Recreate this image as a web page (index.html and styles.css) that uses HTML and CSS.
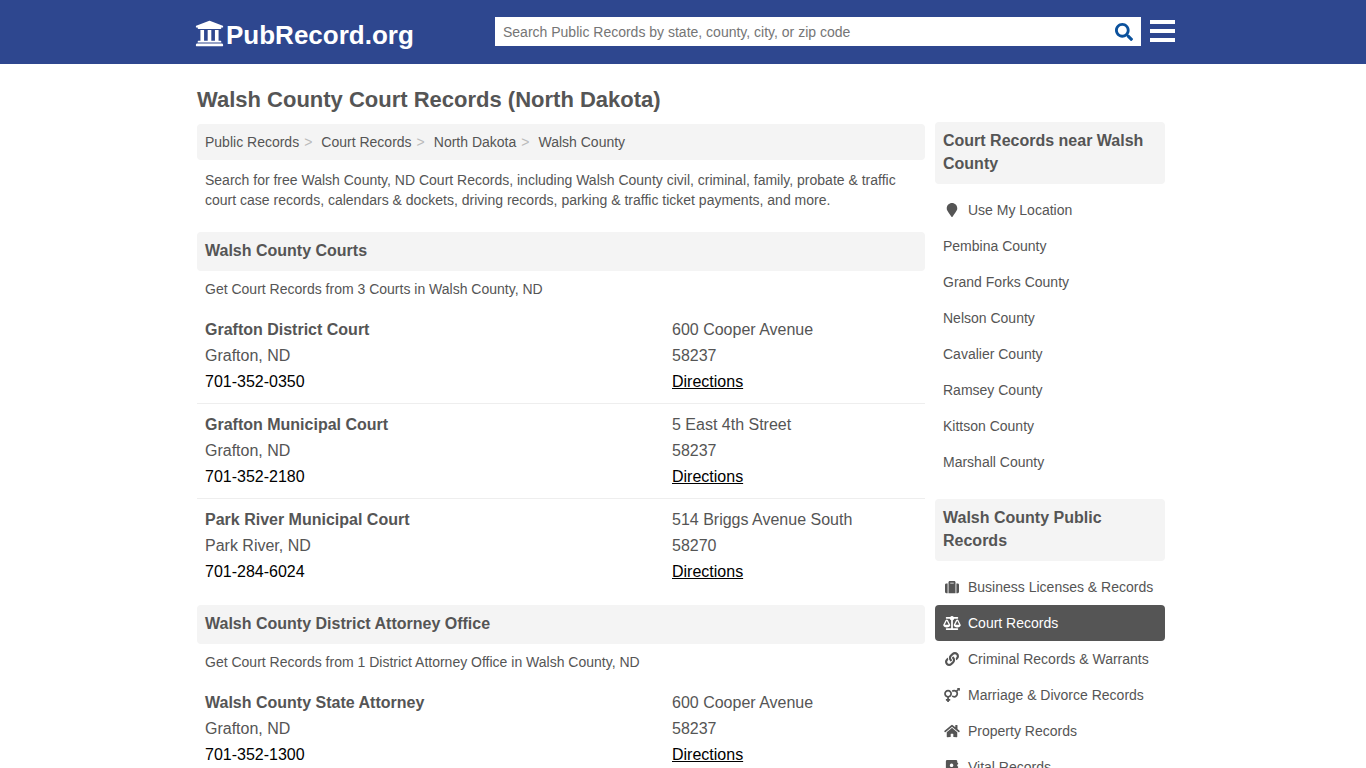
FILE: index.html
```html
<!DOCTYPE html>
<html lang="en">
<head>
<meta charset="utf-8">
<meta name="viewport" content="width=device-width, initial-scale=1">
<title>Walsh County Court Records (North Dakota)</title>
<link rel="stylesheet" href="styles.css">
</head>
<body>

<header class="header">
  <div class="container header-row">
    <a class="logo" href="#">
      <svg viewBox="0 0 512 512" aria-hidden="true"><path d="M496 128v16a8 8 0 0 1-8 8h-24v12c0 6.627-5.373 12-12 12H60c-6.627 0-12-5.373-12-12v-12H24a8 8 0 0 1-8-8v-16a8 8 0 0 1 4.941-7.392l232-88a7.996 7.996 0 0 1 6.118 0l232 88A8 8 0 0 1 496 128zm-24 304H40c-13.255 0-24 10.745-24 24v16a8 8 0 0 0 8 8h464a8 8 0 0 0 8-8v-16c0-13.255-10.745-24-24-24zM96 192v192H60c-6.627 0-12 5.373-12 12v20h416v-20c0-6.627-5.373-12-12-12h-36V192h-64v192h-64V192h-64v192h-64V192H96z"/></svg>
      <span>PubRecord.org</span>
    </a>
    <form class="search" onsubmit="return false">
      <input type="text" aria-label="Search Public Records" placeholder="Search Public Records by state, county, city, or zip code">
      <button type="submit" aria-label="Search">
        <svg viewBox="0 0 512 512"><path d="M505 442.7L405.3 343c-4.5-4.5-10.6-7-17-7H372c27.6-35.3 44-79.7 44-128C416 93.1 322.9 0 208 0S0 93.1 0 208s93.1 208 208 208c48.3 0 92.7-16.4 128-44v16.3c0 6.4 2.5 12.5 7 17l99.7 99.7c9.4 9.4 24.6 9.4 33.9 0l28.3-28.3c9.4-9.4 9.4-24.6.1-34zM208 336c-70.7 0-128-57.2-128-128 0-70.7 57.2-128 128-128 70.7 0 128 57.2 128 128 0 70.7-57.2 128-128 128z"/></svg>
      </button>
    </form>
    <button class="menu" type="button" aria-label="Menu">
      <svg viewBox="0 0 25 22"><path d="M0 0h25v4H0zM0 9h25v4H0zM0 18h25v4H0z"/></svg>
    </button>
  </div>
</header>

<div class="container page">
  <h1>Walsh County Court Records (North Dakota)</h1>

  <div class="columns">
    <main class="content">
      <nav class="breadcrumb" aria-label="Breadcrumb">
        <a href="#">Public Records</a>
        <a href="#">Court Records</a>
        <a href="#">North Dakota</a>
        <a href="#">Walsh County</a>
      </nav>
      <p>Search for free Walsh County, ND Court Records, including Walsh County civil, criminal, family, probate &amp; traffic court case records, calendars &amp; dockets, driving records, parking &amp; traffic ticket payments, and more.</p>

      <section>
        <h2>Walsh County Courts</h2>
        <p>Get Court Records from 3 Courts in Walsh County, ND</p>
        <div class="office">
          <div>
            <a class="name" href="#">Grafton District Court</a>
            <span>Grafton, ND</span>
            <a class="phone" href="tel:701-352-0350">701-352-0350</a>
          </div>
          <div>
            <span>600 Cooper Avenue</span>
            <span>58237</span>
            <a class="directions" href="#">Directions</a>
          </div>
        </div>
        <div class="office">
          <div>
            <a class="name" href="#">Grafton Municipal Court</a>
            <span>Grafton, ND</span>
            <a class="phone" href="tel:701-352-2180">701-352-2180</a>
          </div>
          <div>
            <span>5 East 4th Street</span>
            <span>58237</span>
            <a class="directions" href="#">Directions</a>
          </div>
        </div>
        <div class="office">
          <div>
            <a class="name" href="#">Park River Municipal Court</a>
            <span>Park River, ND</span>
            <a class="phone" href="tel:701-284-6024">701-284-6024</a>
          </div>
          <div>
            <span>514 Briggs Avenue South</span>
            <span>58270</span>
            <a class="directions" href="#">Directions</a>
          </div>
        </div>
      </section>

      <section>
        <h2>Walsh County District Attorney Office</h2>
        <p>Get Court Records from 1 District Attorney Office in Walsh County, ND</p>
        <div class="office">
          <div>
            <a class="name" href="#">Walsh County State Attorney</a>
            <span>Grafton, ND</span>
            <a class="phone" href="tel:701-352-1300">701-352-1300</a>
          </div>
          <div>
            <span>600 Cooper Avenue</span>
            <span>58237</span>
            <a class="directions" href="#">Directions</a>
          </div>
        </div>
      </section>
    </main>

    <aside class="sidebar">
      <section>
        <h2>Court Records near Walsh County</h2>
        <ul>
          <li><a href="#"><svg viewBox="0 0 384 512"><path d="M172.268 501.67C26.97 291.031 0 269.413 0 192 0 85.961 85.961 0 192 0s192 85.961 192 192c0 77.413-26.97 99.031-172.268 309.67-9.535 13.774-29.93 13.773-39.464 0z"/></svg>Use My Location</a></li>
          <li><a href="#">Pembina County</a></li>
          <li><a href="#">Grand Forks County</a></li>
          <li><a href="#">Nelson County</a></li>
          <li><a href="#">Cavalier County</a></li>
          <li><a href="#">Ramsey County</a></li>
          <li><a href="#">Kittson County</a></li>
          <li><a href="#">Marshall County</a></li>
        </ul>
      </section>

      <section>
        <h2>Walsh County Public Records</h2>
        <ul>
          <li><a href="#"><svg viewBox="0 0 512 512"><path d="M128 480h256V80c0-26.5-21.5-48-48-48H176c-26.5 0-48 21.5-48 48v400zm64-384h128v32H192V96zm320 80v256c0 26.5-21.5 48-48 48h-48V128h48c26.5 0 48 21.5 48 48zM96 480H48c-26.5 0-48-21.5-48-48V176c0-26.5 21.5-48 48-48h48v352z"/></svg>Business Licenses &amp; Records</a></li>
          <li><a class="active" href="#"><svg viewBox="0 0 640 512"><path d="M256 336h-.02c0-16.18 1.34-8.73-85.05-181.51-17.65-35.29-68.19-35.36-85.87 0C-2.06 328.75.02 320.33.02 336H0c0 44.18 57.31 80 128 80s128-35.82 128-80zM128 176l72 144H56l72-144zm511.98 160c0-16.18 1.34-8.73-85.05-181.51-17.65-35.29-68.19-35.36-85.87 0-87.12 174.26-85.04 165.84-85.04 181.51H384c0 44.18 57.31 80 128 80s128-35.82 128-80h-.02zM440 320l72-144 72 144H440zm88 128H352V153.25c23.51-10.29 41.16-31.48 46.39-57.25H528c8.84 0 16-7.16 16-16V48c0-8.84-7.16-16-16-16H383.64C369.04 12.68 346.09 0 320 0s-49.04 12.68-63.64 32H112c-8.84 0-16 7.16-16 16v32c0 8.84 7.16 16 16 16h129.61c5.23 25.76 22.87 46.96 46.39 57.25V448H112c-8.84 0-16 7.16-16 16v32c0 8.84 7.16 16 16 16h416c8.84 0 16-7.16 16-16v-32c0-8.84-7.16-16-16-16z"/></svg>Court Records</a></li>
          <li><a href="#"><svg viewBox="0 0 512 512"><path d="M326.612 185.391c59.747 59.809 58.927 155.698.36 214.59-.11.12-.24.25-.36.37l-67.2 67.2c-59.27 59.27-155.699 59.262-214.96 0-59.27-59.26-59.27-155.7 0-214.96l37.106-37.106c9.84-9.84 26.786-3.3 27.294 10.606.648 17.722 3.826 35.527 9.69 52.721 1.986 5.822.567 12.262-3.783 16.612l-13.087 13.087c-28.026 28.026-28.905 73.66-1.155 101.96 28.024 28.579 74.086 28.749 102.325.51l67.2-67.19c28.191-28.191 28.073-73.757 0-101.83-3.701-3.694-7.429-6.564-10.341-8.569a16.037 16.037 0 0 1-6.947-12.606c-.396-10.567 3.348-21.456 11.698-29.806l21.054-21.055c5.521-5.521 14.182-6.199 20.584-1.731a152.482 152.482 0 0 1 20.522 17.197zM467.547 44.449c-59.261-59.262-155.69-59.27-214.96 0l-67.2 67.2c-.12.12-.25.25-.36.37-58.566 58.892-59.387 154.781.36 214.59a152.454 152.454 0 0 0 20.521 17.196c6.402 4.468 15.064 3.789 20.584-1.731l21.054-21.055c8.35-8.35 12.094-19.239 11.698-29.806a16.037 16.037 0 0 0-6.947-12.606c-2.912-2.005-6.64-4.875-10.341-8.569-28.073-28.073-28.191-73.639 0-101.83l67.2-67.19c28.239-28.239 74.3-28.069 102.325.51 27.75 28.3 26.872 73.934-1.155 101.96l-13.087 13.087c-4.35 4.35-5.769 10.79-3.783 16.612 5.864 17.194 9.042 34.999 9.69 52.721.509 13.906 17.454 20.446 27.294 10.606l37.106-37.106c59.271-59.259 59.271-155.699.001-214.959z"/></svg>Criminal Records &amp; Warrants</a></li>
          <li><a href="#"><svg viewBox="0 0 576 512"><path d="M564 0h-79c-10.7 0-16 12.9-8.5 20.5l16.9 16.9-48.7 48.7C422.5 72.1 396.2 64 368 64c-33.7 0-64.6 11.6-89.2 30.9 14 16.7 25 36 32.1 57.1 14.5-14.8 34.7-24 57.1-24 44.1 0 80 35.9 80 80s-35.9 80-80 80c-22.3 0-42.6-9.2-57.1-24-7.1 21.1-18 40.4-32.1 57.1 24.5 19.4 55.5 30.9 89.2 30.9 79.5 0 144-64.5 144-144 0-28.2-8.1-54.5-22.1-76.7l48.7-48.7 16.9 16.9c2.4 2.4 5.4 3.5 8.4 3.5 6.2 0 12.1-4.8 12.1-12V12c0-6.6-5.4-12-12-12zM144 64C64.5 64 0 128.5 0 208c0 68.5 47.9 125.9 112 140.4V400H76c-6.6 0-12 5.4-12 12v40c0 6.6 5.4 12 12 12h36v36c0 6.6 5.4 12 12 12h40c6.6 0 12-5.4 12-12v-36h36c6.6 0 12-5.4 12-12v-40c0-6.6-5.4-12-12-12h-36v-51.6c64.1-14.6 112-71.9 112-140.4 0-79.5-64.5-144-144-144zm0 224c-44.1 0-80-35.9-80-80s35.9-80 80-80 80 35.9 80 80-35.9 80-80 80z"/></svg>Marriage &amp; Divorce Records</a></li>
          <li><a href="#"><svg viewBox="0 0 576 512"><path d="M280.37 148.26L96 300.11V464a16 16 0 0 0 16 16l112.06-.29a16 16 0 0 0 15.92-16V368a16 16 0 0 1 16-16h64a16 16 0 0 1 16 16v95.64a16 16 0 0 0 16 16.05L464 480a16 16 0 0 0 16-16V300L295.67 148.26a12.19 12.19 0 0 0-15.3 0zM571.6 251.47L488 182.56V44.05a12 12 0 0 0-12-12h-56a12 12 0 0 0-12 12v72.61L318.47 43a48 48 0 0 0-61 0L4.34 251.47a12 12 0 0 0-1.6 16.9l25.5 31A12 12 0 0 0 45.15 301l235.22-193.74a12.19 12.19 0 0 1 15.3 0L530.9 301a12 12 0 0 0 16.9-1.6l25.5-31a12 12 0 0 0-1.7-16.93z"/></svg>Property Records</a></li>
          <li><a href="#"><svg viewBox="0 0 448 512"><path fill-rule="evenodd" d="M48 0h320a48 48 0 0 1 48 48v48h20a12 12 0 0 1 12 12v40a12 12 0 0 1-12 12h-20v64h20a12 12 0 0 1 12 12v40a12 12 0 0 1-12 12h-20v64h20a12 12 0 0 1 12 12v40a12 12 0 0 1-12 12h-20v48a48 48 0 0 1-48 48H48a48 48 0 0 1-48-48V48A48 48 0 0 1 48 0zM208 128a64 64 0 1 0 1 0zM119 384h178a22 22 0 0 0 23-19v-19c0-32-30-58-67-58-12 0-18 8-45 8s-33-8-45-8c-37 0-67 26-67 58v19a22 22 0 0 0 23 19z"/></svg>Vital Records</a></li>
        </ul>
      </section>
    </aside>
  </div>
</div>

</body>
</html>
```
FILE: styles.css
```css
* {
  box-sizing: border-box;
}

body {
  margin: 0;
  background: #fff;
  color: #555;
  font-family: "Liberation Sans", Arial, sans-serif;
  font-size: 14px;
  line-height: 20px;
}

a {
  color: inherit;
  text-decoration: none;
}

svg {
  fill: currentColor;
}

.container {
  max-width: 984px;
  margin: 0 auto;
}

/* header */
.header {
  background: #2e478f;
  color: #fff;
}

.header-row {
  display: flex;
  align-items: center;
  height: 64px;
  padding: 0 0 2px 4px;
}

.logo {
  display: flex;
  align-items: center;
  gap: 2px;
  width: 300px;
  padding-top: 7px;
  font-size: 26px;
  font-weight: bold;
  line-height: 30px;
}

.logo svg {
  width: 29px;
  height: 29px;
  margin-bottom: 3px;
}

.search {
  display: flex;
  flex: 1;
  height: 29px;
  background: #fff;
}

.search input {
  flex: 1;
  padding: 2px 8px 0;
  border: none;
  background: none;
  font: inherit;
}

.search input::placeholder {
  color: #757575;
}

.search button {
  display: flex;
  align-items: center;
  padding: 2px 8px 0;
  border: none;
  background: none;
  color: #0b519c;
  cursor: pointer;
}

.search button svg {
  width: 18px;
  height: 18px;
}

.menu {
  margin-left: 9px;
  padding: 0;
  border: none;
  background: none;
  color: #fff;
  cursor: pointer;
}

.menu svg {
  display: block;
  width: 25px;
  height: 22px;
}

/* page */
.page {
  padding: 23px 10px 20px 6px;
}

h1 {
  margin: 0 0 9px;
  font-size: 22px;
  line-height: 26px;
}

h2 {
  margin: 0;
  padding: 7px 8px 9px;
  border-radius: 4px;
  background: #f4f4f4;
  font-size: 16px;
  line-height: 23px;
}

p {
  margin: 0;
  padding: 10px 8px;
}

.columns {
  display: flex;
  align-items: flex-start;
  gap: 10px;
}

.content {
  flex: 1;
  padding-top: 2px;
}

.content section {
  margin-top: 12px;
}

.content section p {
  padding-top: 8px;
}

.breadcrumb {
  display: flex;
  padding: 8px;
  border-radius: 4px;
  background: #f4f4f4;
}

.breadcrumb a + a::before {
  content: ">";
  margin: 0 9px 0 5px;
  color: #bbb;
}

.office {
  display: grid;
  grid-template-columns: 1fr 245px;
  padding: 8px;
  font-size: 16px;
  line-height: 26px;
}

.office + .office {
  border-top: 1px solid #eee;
}

.office div {
  display: flex;
  flex-direction: column;
  align-items: flex-start;
}

.name {
  font-weight: bold;
}

.phone, .directions {
  color: #000;
}

.directions {
  text-decoration: underline;
}

/* sidebar */
.sidebar {
  width: 230px;
}

.sidebar section + section {
  margin-top: 19px;
}

.sidebar ul {
  margin: 8px 0 0;
  padding: 0;
  list-style: none;
}

.sidebar li a {
  display: flex;
  align-items: center;
  gap: 7px;
  padding: 8px;
  border-radius: 4px;
}

.sidebar li a.active {
  background: #555;
  color: #fff;
}

.sidebar li svg {
  width: 18px;
  height: 14px;
}
```
